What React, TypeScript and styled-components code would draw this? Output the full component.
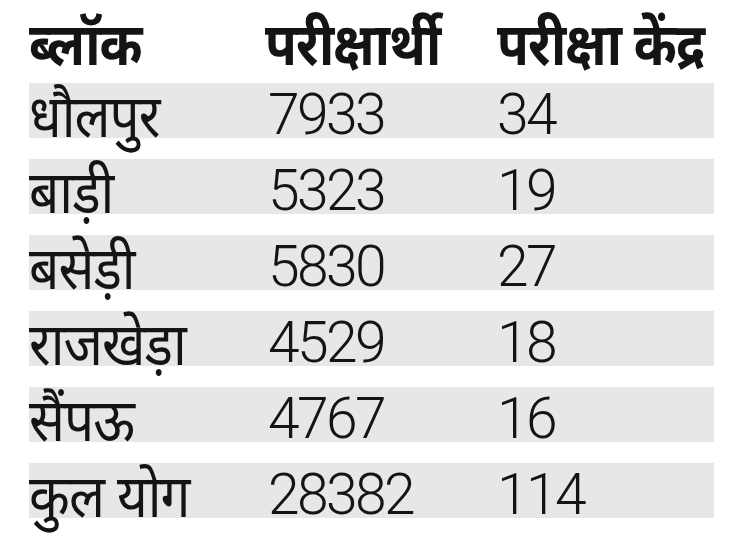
import React from "react";
import styled, { createGlobalStyle } from "styled-components";

const Global = createGlobalStyle`
  html, body { margin: 0; padding: 0; background: #ffffff; }
  body { width: 730px; height: 548px; overflow: hidden; }
`;

const Table = styled.div`
  width: 685px;
  margin-left: 29px;
  display: flex;
  flex-direction: column;
  gap: 21px;
  font-family: "Noto Sans Devanagari", "Noto Sans", "Lohit Devanagari", "FreeSans", sans-serif;
  color: #141414;
`;

const Row = styled.div<{ $head?: boolean }>`
  display: grid;
  grid-template-columns: 239px 229px 1fr;
  height: ${(p) => (p.$head ? "62px" : "55px")};
  background: ${(p) => (p.$head ? "transparent" : "#e6e7e8")};
  align-items: start;
`;

const HeadCell = styled.div<{ $shift?: number }>`
  font-weight: 700;
  font-size: 59px;
  line-height: 1;
  padding-top: 21px;
  margin-left: ${(p) => p.$shift ?? 0}px;
  white-space: nowrap;
  letter-spacing: -1px;
  transform: scaleX(0.88);
  transform-origin: left center;
`;

const NameCell = styled.div`
  font-weight: 400;
  font-size: 59px;
  line-height: 1;
  padding-top: 10px;
  white-space: nowrap;
  letter-spacing: -1px;
  transform: scaleX(0.9);
  transform-origin: left center;
`;

const NumCell = styled.div`
  font-family: "Roboto", "Liberation Sans", sans-serif;
  font-weight: 300;
  font-size: 57px;
  line-height: 46px;
  padding-top: 9px;
  letter-spacing: -2.6px;
  white-space: nowrap;
`;

const rows: [string, string, string][] = [
  ["धौलपुर", "7933", "34"],
  ["बाड़ी", "5323", "19"],
  ["बसेड़ी", "5830", "27"],
  ["राजखेड़ा", "4529", "18"],
  ["सैंपऊ", "4767", "16"],
  ["कुल योग", "28382", "114"],
];

export default function App() {
  return (
    <>
      <Global />
      <Table>
        <Row $head>
          <HeadCell>ब्लॉक</HeadCell>
          <HeadCell $shift={-3}>परीक्षार्थी</HeadCell>
          <HeadCell>परीक्षा केंद्र</HeadCell>
        </Row>
        {rows.map(([name, a, b]) => (
          <Row key={name}>
            <NameCell>{name}</NameCell>
            <NumCell>{a}</NumCell>
            <NumCell>{b}</NumCell>
          </Row>
        ))}
      </Table>
    </>
  );
}
